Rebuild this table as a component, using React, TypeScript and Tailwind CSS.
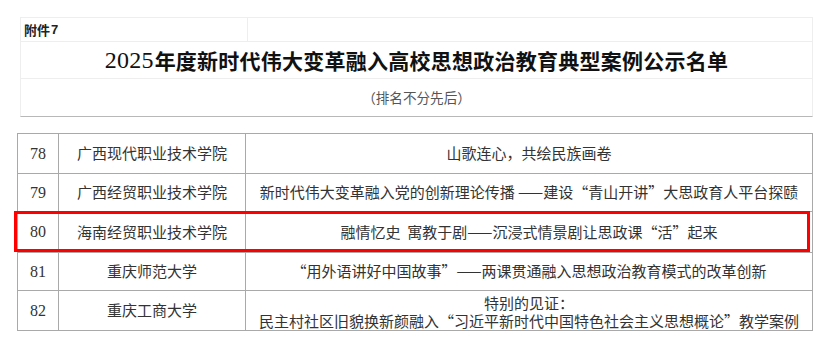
import React from "react";

const rows: { n: string; school: string; title: React.ReactNode; h: string }[] = [
  { n: "78", school: "广西现代职业技术学院", title: "山歌连心，共绘民族画卷", h: "h-[40px]" },
  {
    n: "79",
    school: "广西经贸职业技术学院",
    title: "新时代伟大变革融入党的创新理论传播 ——建设“青山开讲”大思政育人平台探赜",
    h: "h-[38px]",
  },
  {
    n: "80",
    school: "海南经贸职业技术学院",
    title: "融情忆史  寓教于剧——沉浸式情景剧让思政课“活”起来",
    h: "h-[41px]",
  },
  {
    n: "81",
    school: "重庆师范大学",
    title: "“用外语讲好中国故事”——两课贯通融入思想政治教育模式的改革创新",
    h: "h-[38px]",
  },
  {
    n: "82",
    school: "重庆工商大学",
    title: (
      <div className="flex flex-col items-center justify-end h-[39px] leading-[18px]">
        <span>特别的见证：</span>
        <span>民主村社区旧貌换新颜融入“习近平新时代中国特色社会主义思想概论”教学案例</span>
      </div>
    ),
    h: "h-[39px]",
  },
];

export default function App() {
  return (
    <div className="w-[831px] h-[346px] bg-white overflow-hidden relative font-['Noto_Sans_CJK_SC',sans-serif] text-[#333]">
      <div className="pt-[17px] pl-[20px]">
        <div className="w-[793px] border border-[#eeeeee] border-b-[#b8b8b8]">
          <div className="h-[24px] flex border-b border-[#eeeeee]">
            <div className="w-[227px] border-r border-[#eeeeee] flex items-center pl-[3px] text-[13px] font-bold text-[#222] leading-none">
              附件<span className="font-['Liberation_Sans',sans-serif] ml-[1px]">7</span>
            </div>
            <div className="flex-1" />
          </div>
          <div className="h-[37px] flex items-center justify-center border-b border-[#eeeeee] text-[21px] font-bold text-[#111] leading-none tracking-[0.25px]">
            <span className="font-['Liberation_Serif',serif] text-[24px] font-normal mr-[1px]">2025</span>
            年度新时代伟大变革融入高校思想政治教育典型案例公示名单
          </div>
          <div className="h-[37px] flex items-center justify-center text-[13.6px] text-[#555] leading-none">
            （排名不分先后）
          </div>
        </div>
      </div>

      <div className="relative ml-[17px] mt-[16px] w-[795px]">
        <table className="border-collapse table-fixed w-[795px] text-[15px] text-[#333]">
          <colgroup>
            <col className="w-[41px]" />
            <col className="w-[187px]" />
            <col className="w-[567px]" />
          </colgroup>
          <tbody>
            {rows.map((r) => (
              <tr key={r.n} className={r.h}>
                <td className="border border-[#a9a9a9] p-0 text-center font-['Liberation_Serif',serif] text-[16px] text-[#333] align-middle">
                  {r.n}
                </td>
                <td className="border border-[#a9a9a9] p-0 text-center align-middle whitespace-nowrap">
                  {r.school}
                </td>
                <td className="border border-[#a9a9a9] p-0 text-center align-middle whitespace-pre">
                  {r.title}
                </td>
              </tr>
            ))}
          </tbody>
        </table>
        <div className="absolute left-[-3px] top-[78px] w-[796px] h-[41px] border-[3px] border-[#ff0000] pointer-events-none" />
      </div>
    </div>
  );
}
